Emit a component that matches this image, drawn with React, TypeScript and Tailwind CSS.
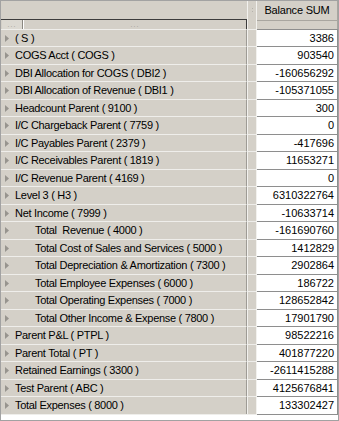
import React from "react";

type Row = { label: string; value: string; indent?: boolean };

const rows: Row[] = [
  { label: "( S )", value: "3386" },
  { label: "COGS Acct ( COGS )", value: "903540" },
  { label: "DBI Allocation for COGS ( DBI2 )", value: "-160656292" },
  { label: "DBI Allocation of Revenue ( DBI1 )", value: "-105371055" },
  { label: "Headcount Parent ( 9100 )", value: "300" },
  { label: "I/C Chargeback Parent ( 7759 )", value: "0" },
  { label: "I/C Payables Parent ( 2379 )", value: "-417696" },
  { label: "I/C Receivables Parent ( 1819 )", value: "11653271" },
  { label: "I/C Revenue Parent ( 4169 )", value: "0" },
  { label: "Level 3 ( H3 )", value: "6310322764" },
  { label: "Net Income ( 7999 )", value: "-10633714" },
  { label: "Total  Revenue ( 4000 )", value: "-161690760", indent: true },
  { label: "Total Cost of Sales and Services ( 5000 )", value: "1412829", indent: true },
  { label: "Total Depreciation & Amortization ( 7300 )", value: "2902864", indent: true },
  { label: "Total Employee Expenses ( 6000 )", value: "186722", indent: true },
  { label: "Total Operating Expenses ( 7000 )", value: "128652842", indent: true },
  { label: "Total Other Income & Expense ( 7800 )", value: "17901790", indent: true },
  { label: "Parent P&L ( PTPL )", value: "98522216" },
  { label: "Parent Total ( PT )", value: "401877220" },
  { label: "Retained Earnings ( 3300 )", value: "-2611415288" },
  { label: "Test Parent ( ABC )", value: "4125676841" },
  { label: "Total Expenses ( 8000 )", value: "133302427" },
];

const Arrow = () => (
  <svg width="4" height="7" viewBox="0 0 4 7" className="ml-[4px] shrink-0">
    <polygon points="0,0 4,3.5 0,7" fill="#97948e" />
  </svg>
);

const Dots = () => <span className="text-[7px] leading-none tracking-[1px] text-[#9c9a94]">...</span>;

export default function App() {
  return (
    <div className="w-[339px] h-[421px] border border-[#a2a2a2] bg-white font-['Liberation_Sans',Arial,sans-serif] text-[11px] text-black overflow-hidden">
      {/* header */}
      <div className="flex">
        <div className="w-[246px] shrink-0">
          <div className="h-[19px] bg-[#d4d0c8] border-b border-[#3c3c3c]" />
          <div className="h-[9px] flex bg-[#d4d0c8] border-r border-[#3c3c3c]">
            <div className="w-[21px] ml-[1px] flex items-center justify-center bg-[#dcd9d2] border-r border-[#8a8780]">
              <Dots />
            </div>
            <div className="flex-1 flex items-center justify-center border-l border-white">
              <Dots />
            </div>
          </div>
        </div>
        <div className="w-[10px] shrink-0 bg-[#d4d0c8] border-l border-r border-[#f2f1ee] flex justify-center pt-[7px]">
          <div className="flex flex-col gap-[2px]">
            <div className="w-[1px] h-[1px] bg-[#b5b2ab]" />
            <div className="w-[1px] h-[1px] bg-[#b5b2ab]" />
          </div>
        </div>
        <div className="flex-1 flex flex-col">
          <div className="h-[20px] bg-[#d4d0c8] border-b border-r border-[#a9a6a0] flex items-center justify-center whitespace-nowrap tracking-[-0.2px]">
            Balance SUM
          </div>
          <div className="h-[8px] bg-[#d4d0c8] border-r border-[#a9a6a0]" />
        </div>
      </div>

      {/* data rows */}
      {rows.map((r, i) => (
        <div key={i} className={`flex ${i % 2 ? "h-[18px]" : "h-[17px]"}`}>
          <div className="w-[246px] shrink-0 flex items-center bg-[#d4d0c8] border-t border-t-[#efeeeb] border-r border-r-[#9e9b95] whitespace-pre">
            <Arrow />
            <span className={`tracking-[-0.3px] ${r.indent ? "ml-[26px]" : "ml-[6px]"}`}>{r.label}</span>
          </div>
          <div className="w-[10px] shrink-0 bg-[#d4d0c8] border-t border-t-[#efeeeb] border-x border-x-[#f2f1ee]" />
          <div className="flex-1 flex items-center justify-end pr-[3px] bg-white border-t border-r border-[#8e8e8e]">
            {r.value}
          </div>
        </div>
      ))}
      <div className="flex h-[1px]">
        <div className="w-[256px] bg-[#efeeeb]" />
        <div className="flex-1 bg-[#8e8e8e]" />
      </div>
    </div>
  );
}
